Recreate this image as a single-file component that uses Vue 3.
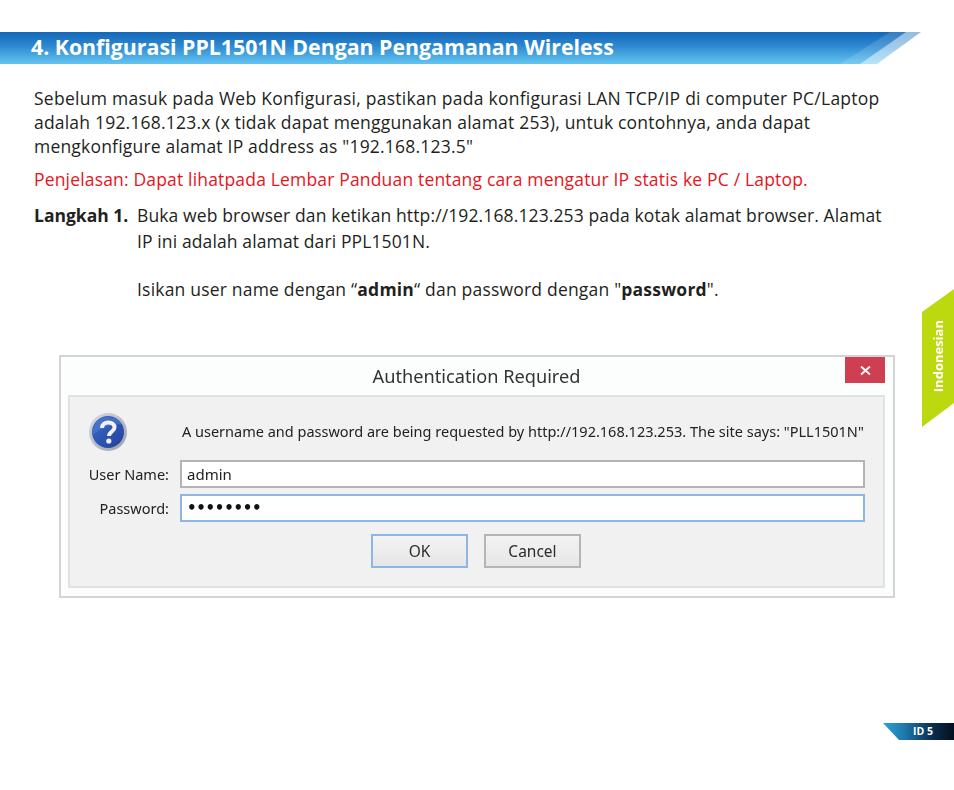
<script setup>
const bullets = '••••••••'
</script>

<template>
  <div class="page">
    <header class="banner">
      <svg class="banner-bg" width="954" height="32" viewBox="0 0 954 32" aria-hidden="true">
        <defs>
          <linearGradient id="bannerBlue" x1="0" y1="0" x2="0" y2="1">
            <stop offset="0" stop-color="#1568b8" />
            <stop offset="0.4" stop-color="#2a85ce" />
            <stop offset="1" stop-color="#62c4f0" />
          </linearGradient>
        </defs>
        <polygon points="0,0 921,0 877,32 0,32" fill="url(#bannerBlue)" opacity="0.45" />
        <polygon points="0,0 906,0 860,32 0,32" fill="url(#bannerBlue)" opacity="0.75" />
        <polygon points="0,0 890,0 840,32 0,32" fill="url(#bannerBlue)" />
      </svg>
      <h1 class="title">4. Konfigurasi PPL1501N Dengan Pengamanan Wireless</h1>
    </header>

    <main class="content">
      <p class="para">
        <span class="wide">Sebelum masuk pada Web Konfigurasi, pastikan pada konfigurasi LAN TCP/IP di computer PC/Laptop</span><br />
        adalah 192.168.123.x (x tidak dapat menggunakan alamat 253), untuk contohnya, anda dapat<br />
        mengkonfigure alamat IP address as "192.168.123.5"
      </p>
      <p class="para red">Penjelasan: Dapat lihatpada Lembar Panduan tentang cara mengatur IP statis ke PC / Laptop.</p>
      <div class="step">
        <strong class="step-label">Langkah 1.</strong>
        <div class="step-body">
          <p class="step-line">Buka web browser dan ketikan http://192.168.123.253 pada kotak alamat browser. Alamat<br />IP ini adalah alamat dari PPL1501N.</p>
          <p class="step-line step-last">Isikan user name dengan “<b>admin</b>“ dan password dengan "<b>password</b>".</p>
        </div>
      </div>
    </main>

    <section class="dialog">
      <div class="dialog-head">
        <span class="dialog-title">Authentication Required</span>
        <span class="close">
          <svg width="11" height="11" viewBox="0 0 11 11" aria-hidden="true"><path d="M1 1.5 10 9.5M10 1.5 1 9.5" stroke="#fff" stroke-width="1.8" /></svg>
        </span>
      </div>
      <div class="panel">
        <div class="message">
          <svg class="help" width="40" height="40" viewBox="0 0 40 40" aria-hidden="true">
            <defs>
              <linearGradient id="ring" x1="0" y1="0" x2="1" y2="1">
                <stop offset="0" stop-color="#d8dbe2" />
                <stop offset="1" stop-color="#9aa0aa" />
              </linearGradient>
              <linearGradient id="ball" x1="0" y1="0" x2="1" y2="1">
                <stop offset="0" stop-color="#3c6cc8" />
                <stop offset="1" stop-color="#213f9e" />
              </linearGradient>
            </defs>
            <circle cx="20" cy="20" r="19" fill="url(#ring)" />
            <circle cx="20" cy="20" r="16" fill="url(#ball)" />
            <path d="M5 23C12 16 24 12 34 12 30 6 24 5 20 5 11 5 5 12 5 20Z" fill="#5b86d8" opacity="0.45" />
            <path d="M14 16C14 12 17 10.5 20.3 10.5 24 10.5 26.5 12.5 26.5 15.5 26.5 19.5 21 19.5 21 24" fill="none" stroke="#f2f2f2" stroke-width="4" />
            <circle cx="20.8" cy="29" r="2.6" fill="#f2f2f2" />
          </svg>
          <span class="message-text">A username and password are being requested by http://192.168.123.253. The site says: "PLL1501N"</span>
        </div>
        <div class="field">
          <label class="label">User Name:</label>
          <div class="input">admin</div>
        </div>
        <div class="field second">
          <label class="label">Password:</label>
          <div class="input focus dots">{{ bullets }}</div>
        </div>
        <div class="buttons">
          <button class="btn primary" type="button">OK</button>
          <button class="btn" type="button">Cancel</button>
        </div>
      </div>
    </section>

    <aside class="lang-tab"><span class="lang-text">Indonesian</span></aside>
    <div class="page-tab"><span>ID 5</span></div>
  </div>
</template>

<style>
html, body { margin: 0; background: #fff; }
</style>

<style scoped>
.page {
  position: relative;
  width: 954px;
  height: 790px;
  padding-top: 32px;
  box-sizing: border-box;
  overflow: hidden;
  background: #fff;
  font-family: "Open Sans", "Noto Sans", sans-serif;
  color: #231f20;
}
.banner {
  position: relative;
  height: 32px;
}
.banner-bg {
  position: absolute;
  left: 0;
  top: 0;
}
.title {
  position: relative;
  margin: 0;
  padding-left: 31px;
  font-size: 21.3px;
  line-height: 30px;
  font-weight: 700;
  color: #fff;
}
.content {
  padding: 23px 0 0 34px;
  font-size: 17.5px;
  line-height: 23.8px;
}
.para {
  margin: 0 0 10px;
  white-space: nowrap;
  letter-spacing: 0.2px;
}
.wide { letter-spacing: 0.26px; }
.red { color: #e8141c; margin-bottom: 12px; letter-spacing: 0.17px; }
.step {
  display: flex;
}
.step-label {
  width: 103px;
  flex: none;
  white-space: nowrap;
  font-weight: 700;
}
.step-body {
  letter-spacing: 0.12px;
  margin-top: -1px;
}
.step-line {
  margin: 0 0 22.5px;
  white-space: nowrap;
  line-height: 25.5px;
}
.step-last {
  margin: 0;
  letter-spacing: 0.2px;
}
.dialog {
  margin: 53px 0 0 59px;
  width: 836px;
  height: 243px;
  box-sizing: border-box;
  border: 2px solid #d4d4d4;
  background: #fcfdfd;
  padding: 0 8px 8px 7px;
  display: flex;
  flex-direction: column;
  font-family: "Noto Sans", "Open Sans", sans-serif;
  color: #222;
  filter: blur(0.35px);
}
.dialog-head {
  height: 38px;
  flex: none;
  display: flex;
  justify-content: center;
  align-items: center;
  position: relative;
}
.dialog-title {
  font-size: 18.2px;
  color: #333;
}
.close {
  position: absolute;
  right: 0;
  top: 0;
  width: 40px;
  height: 26px;
  background: #cf3f52;
  display: flex;
  align-items: center;
  justify-content: center;
}
.panel {
  flex: 1;
  border: 2px solid #e2e2e2;
  background: #f1f1f1;
  padding: 0 18px 0 20px;
  display: flex;
  flex-direction: column;
}
.message {
  display: flex;
  align-items: center;
  height: 61px;
  flex: none;
}
.help {
  flex: none;
  margin-left: -2px;
  margin-right: 54px;
  margin-top: 8px;
}
.message-text {
  font-size: 14.5px;
  white-space: nowrap;
  margin-top: 6px;
}
.field {
  display: flex;
  align-items: center;
  height: 28px;
  margin-top: 2px;
}
.second { margin-top: 6px; }
.label {
  width: 81px;
  flex: none;
  text-align: right;
  font-size: 14.5px;
  margin-right: 11px;
  margin-left: -2px;
  white-space: nowrap;
}
.input {
  flex: 1;
  height: 28px;
  box-sizing: border-box;
  border: 2px solid #b4b4b4;
  background: #fff;
  padding-left: 5px;
  font-size: 15px;
  line-height: 24px;
  color: #222;
}
.focus { border-color: #8db6e4; }
.dots {
  font-size: 15px;
  letter-spacing: -0.3px;
  color: #111;
  font-family: "DejaVu Sans", sans-serif;
  font-weight: 700;
}
.buttons {
  display: flex;
  gap: 16px;
  margin-top: 12px;
  padding-left: 281px;
}
.btn {
  width: 97px;
  height: 34px;
  box-sizing: border-box;
  border: 2px solid #b5b5b5;
  background: linear-gradient(#f3f3f3, #e6e6e6);
  font-family: inherit;
  font-size: 15.5px;
  color: #2b2b2b;
  padding: 0;
}
.primary { border-color: #8db6e4; }
.lang-tab {
  position: absolute;
  right: 0;
  top: 289px;
  width: 32px;
  height: 138px;
  background: #bcd910;
  clip-path: polygon(0 23px, 100% 0, 100% 114px, 0 100%);
  display: flex;
  align-items: center;
  justify-content: center;
}
.lang-text {
  writing-mode: vertical-rl;
  transform: rotate(180deg);
  color: #fff;
  font-size: 13px;
  font-weight: 700;
  margin-top: -3px;
}
.page-tab {
  position: absolute;
  right: 0;
  top: 723px;
  width: 71px;
  height: 17px;
  background: linear-gradient(90deg, #2da0d8 0%, #1d79ad 30%, #0b2c4c 70%, #03101f 100%);
  clip-path: polygon(0 0, 100% 0, 100% 100%, 16px 100%);
  color: #fff;
  font-size: 10.5px;
  font-weight: 700;
  line-height: 17px;
  box-sizing: border-box;
  padding-left: 30px;
}
</style>
